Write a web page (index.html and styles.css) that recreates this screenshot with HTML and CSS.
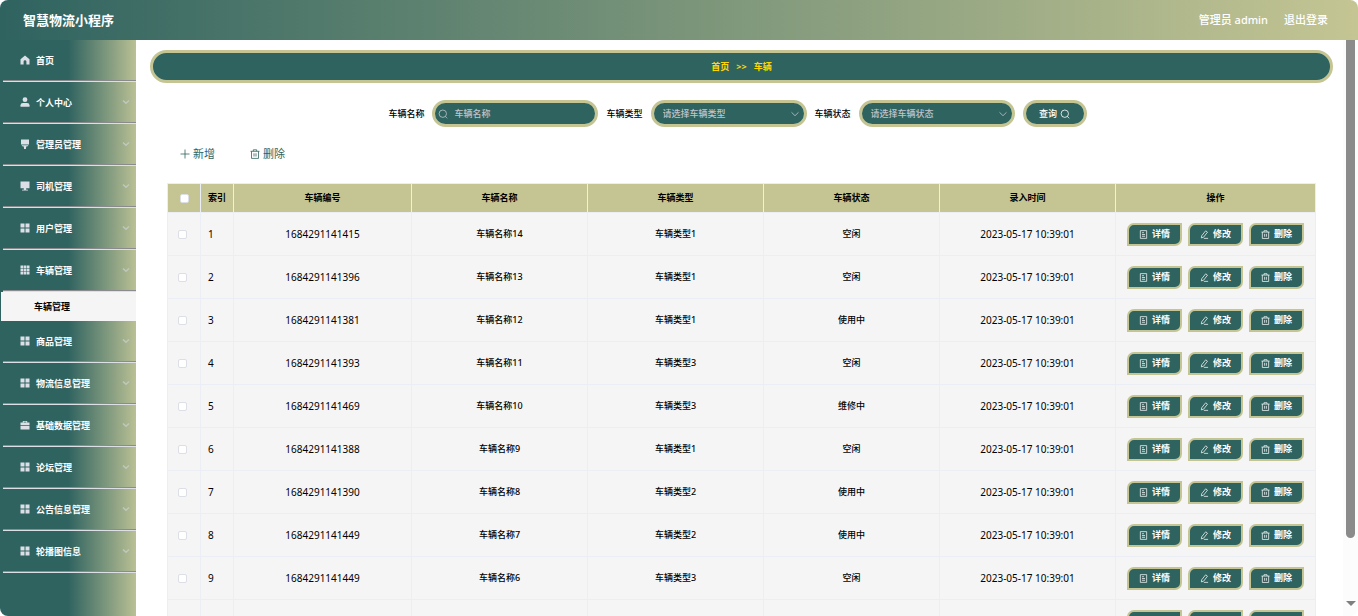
FILE: index.html
```html
<!DOCTYPE html>
<html lang="zh-CN">
<head>
<meta charset="utf-8">
<title>智慧物流小程序</title>
<link rel="stylesheet" href="styles.css">
</head>
<body>
<svg class="sprite" aria-hidden="true">
  <symbol id="home" viewBox="0 0 10 10"><path d="M5 .5.5 4.3V9.5H3.6V6.4Q3.6 5.2 5 5.2T6.4 6.4V9.5H9.5V4.3Z"/></symbol>
  <symbol id="user" viewBox="0 0 10 10"><circle cx="5" cy="2.7" r="2.4"/><path d="M.5 9.8V8.2Q.5 6 3 6H7Q9.500 6 9.500 8.200V9.800Z"/></symbol>
  <symbol id="brush" viewBox="0 0 10 10"><path d="M1 .5H9V5.600H1ZM1.500 6.300H8.500Q8 7.500 6.200 7.600L5.900 10H4.100L3.800 7.600Q2 7.500 1.500 6.300Z"/></symbol>
  <symbol id="monitor" viewBox="0 0 10 10"><path d="M.5.5H9.500V7.300H.5ZM3.800 7.300H6.200V8.700H8V9.500H2V8.700H3.800Z"/></symbol>
  <symbol id="menu" viewBox="0 0 10 10"><path d="M.5.5H4.500V4.500H.5ZM5.500.5H9.500V4.500H5.500ZM.5 5.500H4.500V9.500H.5ZM5.500 5.500H9.500V9.500H5.500Z"/></symbol>
  <symbol id="grid" viewBox="0 0 10 10"><path d="M.5.5H3.200V3.200H.5ZM3.700.5H6.300V3.200H3.700ZM6.800.5H9.500V3.200H6.800ZM.5 3.700H3.200V6.300H.5ZM3.700 3.700H6.300V6.300H3.700ZM6.800 3.700H9.500V6.300H6.800ZM.5 6.800H3.200V9.500H.5ZM3.700 6.800H6.300V9.500H3.700ZM6.800 6.800H9.500V9.500H6.800Z"/></symbol>
  <symbol id="case" viewBox="0 0 10 10"><path d="M.5 2.600H2.800V1H7.200V2.600H9.500V5H.5ZM3.700 2.600H6.300V1.800H3.700ZM.5 5.700H9.500V9.500H.5Z" fill-rule="evenodd"/></symbol>
  <symbol id="down" viewBox="0 0 10 10"><path class="line" d="M1.500 3.300 5 6.700 8.500 3.300"/></symbol>
  <symbol id="down-bold" viewBox="0 0 10 10"><path class="line bold" d="M2 3.500 5 6.200 8 3.500"/></symbol>
  <symbol id="search" viewBox="0 0 10 10"><circle class="line" cx="4.800" cy="4.700" r="3.700"/><path class="line" d="M7.300 7.400 9.200 9.300"/></symbol>
  <symbol id="plus" viewBox="0 0 10 10"><path class="line" d="M5 .5V9.500M.5 5H9.500"/></symbol>
  <symbol id="trash" viewBox="0 0 10 10"><path class="line" d="M.5 2.300H9.500M3.300 2.300V.8H6.700V2.300M1.500 2.300V9.400H8.500V2.300M4 4.300V7.500M6 4.300V7.500"/></symbol>
  <symbol id="doc" viewBox="0 0 10 10"><path class="line" d="M1.500.7H8.500V9.300H1.500ZM3.300 3H5.500M3.300 5H6.700M3.300 7H6.700"/></symbol>
  <symbol id="edit" viewBox="0 0 10 10"><path class="line" d="M6.300.9 8.300 2.400 4 8 1.500 8.800 1.900 6.400ZM4.300 9.300H9"/></symbol>
</svg>

<div class="app">
  <header class="topbar">
    <h1 class="brand">智慧物流小程序</h1>
    <div class="account"><span>管理员 admin</span><a href="#logout">退出登录</a></div>
  </header>
  <div class="body">
    <nav class="sidebar" id="sidebar" aria-label="主菜单"></nav>
    <main class="main">
      <div class="crumbs"><a href="#home">首页</a><span>&gt;&gt;</span><span>车辆</span></div>
      <form class="filters">
        <label for="name">车辆名称</label>
        <span class="field field-text"><svg class="icon"><use href="#search"/></svg><input id="name" type="text" placeholder="车辆名称"></span>
        <label for="type">车辆类型</label>
        <span class="field"><select id="type"><option>请选择车辆类型</option></select><svg class="icon"><use href="#down"/></svg></span>
        <label for="state">车辆状态</label>
        <span class="field"><select id="state"><option>请选择车辆状态</option></select><svg class="icon"><use href="#down"/></svg></span>
        <button class="query" type="button">查询<svg class="icon"><use href="#search"/></svg></button>
      </form>
      <div class="tools">
        <button type="button"><svg class="icon"><use href="#plus"/></svg>新增</button>
        <button type="button"><svg class="icon"><use href="#trash"/></svg>删除</button>
      </div>
      <table class="list">
        <colgroup><col class="c-check"><col class="c-index"><col class="c-no"><col><col><col><col><col class="c-ops"></colgroup>
        <thead><tr><th><input type="checkbox" aria-label="全选"></th><th>索引</th><th>车辆编号</th><th>车辆名称</th><th>车辆类型</th><th>车辆状态</th><th>录入时间</th><th>操作</th></tr></thead>
        <tbody id="rows"></tbody>
      </table>
    </main>
    <div class="scroll" aria-hidden="true"><div class="thumb"></div><div class="arrow"></div></div>
  </div>
</div>
<script src="app.js"></script>
</body>
</html>
```
FILE: styles.css
```css
* { box-sizing: border-box; }
body {
  margin: 0;
  background: #fff;
  color: #000;
  font: 9px/14px "Noto Sans", "Noto Sans CJK SC", sans-serif;
}
button, input, select { font: inherit; }
a { color: inherit; text-decoration: none; }
.sprite { position: absolute; width: 0; height: 0; }
.icon { width: 10px; height: 10px; flex: none; fill: currentColor; }
.line { fill: none; stroke: currentColor; stroke-width: 0.8; }
.bold { stroke-width: 1.5; }

.app { display: flex; flex-direction: column; height: 100vh; border-radius: 8px; overflow: hidden; }
.topbar {
  display: flex;
  align-items: center;
  justify-content: space-between;
  height: 40px;
  flex: none;
  padding: 0 30px 0 23px;
  background: linear-gradient(90deg, #2f6360, #c4c593);
  color: #fff;
}
.brand { margin: 0; font-size: 13px; line-height: 20px; }
.account { display: flex; gap: 16px; font-size: 11px; font-weight: 500; }
.body { display: flex; flex: 1; min-height: 0; }

.sidebar { width: 136px; flex: none; background: linear-gradient(90deg, #2f6360 50%, #bac094); overflow: hidden; }
.item {
  display: flex;
  align-items: center;
  gap: 6px;
  height: 42px;
  margin-left: 3px;
  padding: 0 5px 0 17px;
  border-bottom: 1px solid #dcdfe6;
  box-shadow: inset 0 -1px #8b8b8f;
  color: #fff;
  font-weight: 700;
}
.item .icon { margin-bottom: 2px; color: #dcdfe6; }
.item .more { margin-left: auto; color: #bfc8bd; }
.sub { display: block; height: 29px; margin-left: 1px; padding-left: 33px; background: #f5f5f5; color: #000; line-height: 29px; font-weight: 700; }

.main { flex: 1; min-width: 0; padding: 10px 10px 0 14px; overflow: hidden; }
.crumbs {
  display: flex;
  align-items: center;
  justify-content: center;
  gap: 7px;
  height: 33px;
  border: 3px solid #c4c593;
  border-radius: 17px;
  background: #2f6360;
  color: #ffd700;
  font-weight: 700;
}
.filters { display: flex; align-items: center; justify-content: center; gap: 8px; margin-top: 17px; padding-right: 8px; font-weight: 500; }
.field {
  display: flex;
  align-items: center;
  width: 156px;
  height: 27px;
  padding: 0 4px 0 9px;
  border: 3px solid #c4c593;
  border-radius: 14px;
  background: #2f6360;
  color: #c0c4cc;
}
.field-text { width: 166px; gap: 6px; padding: 0 9px 0 3px; }
.field input, .field select { flex: 1; min-width: 0; padding: 0; border: 0; outline: 0; background: none; color: inherit; appearance: none; }
.field input::placeholder { color: #c0c4cc; opacity: 1; }
.query {
  display: flex;
  align-items: center;
  justify-content: center;
  gap: 3px;
  width: 64px;
  height: 27px;
  padding: 0;
  border: 3px solid #c4c593;
  border-radius: 14px;
  background: #2f6360;
  color: #fff;
  font-weight: 500;
}
.tools { display: flex; gap: 35px; margin: 19px 0 21px 30px; }
.tools button { display: flex; align-items: center; gap: 3px; padding: 0; border: 0; background: none; color: #2f6360; font-size: 11px; line-height: 16px; }

.list { width: calc(100% - 34px); margin-left: 17px; border-collapse: collapse; table-layout: fixed; background: #f5f5f5; text-align: center; }
.list th, .list td { padding: 0; border: 1px solid #ebeef5; }
.list th { height: 29px; background: #c4c593; font-weight: 700; }
.list td { height: 43px; font-weight: 500; }
.list .num { font-size: 10px; font-weight: 400; }
.list td:nth-child(2) { padding-left: 7px; text-align: left; }
.c-check, .c-index { width: 33px; }
.c-no { width: 178px; }
.c-ops { width: 200px; }
.list input {
  display: block;
  width: 9px;
  height: 9px;
  margin: 0 auto;
  border: 1px solid #dcdfe6;
  border-radius: 2px;
  background: #fff;
  appearance: none;
}
.list td:first-child { padding-right: 3px; }
.ops { display: flex; justify-content: center; gap: 6px; }
.ops button {
  display: flex;
  align-items: center;
  justify-content: center;
  gap: 4px;
  width: 55px;
  height: 23px;
  padding: 0;
  border: 2px solid #c4c593;
  border-radius: 7px 0;
  background: #2f6360;
  color: #fff;
  font-weight: 700;
}
.ops .icon { width: 9px; height: 9px; }

.scroll { display: flex; flex-direction: column; align-items: center; justify-content: space-between; width: 15px; flex: none; padding-bottom: 10px; background: #fcfcfc; }
.thumb { width: 9px; height: 88%; border-radius: 0 0 5px 5px; background: #8b8b8b; }
.arrow { border: 5px solid transparent; border-top-color: #7f7f7f; border-bottom: 0; }
```
FILE: app.js
```js
const icon = (id, cls = "") => `<svg class="icon ${cls}"><use href="#${id}"/></svg>`;

const menu = [
  ["home", "首页"], ["user", "个人中心"], ["brush", "管理员管理"], ["monitor", "司机管理"],
  ["menu", "用户管理"], ["grid", "车辆管理", "车辆管理"], ["menu", "商品管理"],
  ["menu", "物流信息管理"], ["case", "基础数据管理"], ["menu", "论坛管理"],
  ["menu", "公告信息管理"], ["menu", "轮播图信息"]
];
document.getElementById("sidebar").innerHTML = menu.map(([id, text, sub], i) =>
  `<a class="item" href="#">${icon(id)}<span>${text}</span>${i ? icon("down-bold", "more") : ""}</a>` +
  (sub ? `<a class="sub" href="#">${sub}</a>` : "")
).join("");

const vehicles = [
  ["1684291141415", "车辆名称14", "车辆类型1", "空闲"],
  ["1684291141396", "车辆名称13", "车辆类型1", "空闲"],
  ["1684291141381", "车辆名称12", "车辆类型1", "使用中"],
  ["1684291141393", "车辆名称11", "车辆类型3", "空闲"],
  ["1684291141469", "车辆名称10", "车辆类型3", "维修中"],
  ["1684291141388", "车辆名称9", "车辆类型1", "空闲"],
  ["1684291141390", "车辆名称8", "车辆类型2", "使用中"],
  ["1684291141449", "车辆名称7", "车辆类型2", "使用中"],
  ["1684291141449", "车辆名称6", "车辆类型3", "空闲"],
  ["", "", "", ""]
];
document.getElementById("rows").innerHTML = vehicles.map(([no, name, type, state], i) =>
  `<tr><td>${no ? `<input type="checkbox" aria-label="选择第${i + 1}行">` : ""}</td>
  <td class="num">${no ? i + 1 : ""}</td><td class="num">${no}</td><td>${name}</td><td>${type}</td><td>${state}</td>
  <td class="num">${no ? "2023-05-17 10:39:01" : ""}</td>
  <td><div class="ops">${[["doc", "详情"], ["edit", "修改"], ["trash", "删除"]].map(([id, text]) =>
    `<button type="button" aria-label="${text}">${no ? icon(id) + text : ""}</button>`).join("")}</div></td></tr>`
).join("");
```
